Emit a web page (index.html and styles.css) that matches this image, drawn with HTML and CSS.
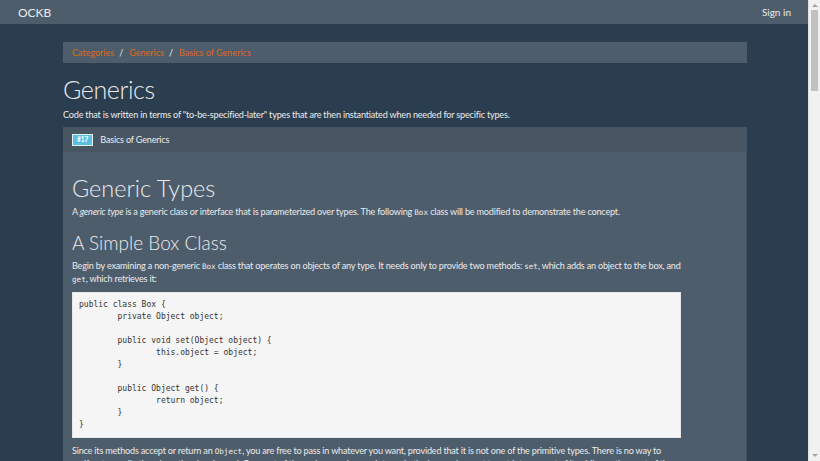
FILE: index.html
```html
<!DOCTYPE html>
<html>
<head>
<meta charset="utf-8">
<link rel="stylesheet" href="styles.css">
</head>
<body>
<div class="page">
<nav class="navbar">
  <a class="brand" href="#">OCKB</a>
  <a class="signin" href="#">Sign in</a>
</nav>
<main class="container">
  <ol class="breadcrumb">
    <li><a href="#">Categories</a></li>
    <li><a href="#">Generics</a></li>
    <li class="active">Basics of Generics</li>
  </ol>
  <h1 class="page-title">Generics</h1>
  <p class="lead">Code that is written in terms of "to-be-specified-later" types that are then instantiated when needed for specific types.</p>
  <section class="panel">
    <div class="panel-heading"><span class="label">#17</span><span class="panel-title">Basics of Generics</span></div>
    <div class="panel-body">
      <article class="content">
        <h2 class="h-big">Generic Types</h2>
        <p>A <em>generic type</em> is a generic class or interface that is parameterized over types. The following <code>Box</code> class will be modified to demonstrate the concept.</p>
        <h3 class="h-mid">A Simple Box Class</h3>
        <p>Begin by examining a non-generic <code>Box</code> class that operates on objects of any type. It needs only to provide two methods: <code>set</code>, which adds an object to the box, and <code>get</code>, which retrieves it:</p>
<pre>public class Box {
        private Object object;

        public void set(Object object) {
                this.object = object;
        }

        public Object get() {
                return object;
        }
}</pre>
        <p class="after">Since its methods accept or return an <code>Object</code>, you are free to pass in whatever you want, provided that it is not one of the primitive types. There is no way to verify, at compile time, how the class is used. One part of the code may place an Integer in the box and expect to get Integers out of it, while another part of the code may mistakenly pass in a String.</p>
      </article>
    </div>
  </section>
</main>
</div>
<div class="scrollbar" aria-hidden="true">
  <span class="arrow up"></span>
  <span class="thumb"></span>
  <span class="arrow down"></span>
</div>
</body>
</html>
```
FILE: styles.css
```css
html, body {
  margin: 0;
  padding: 0;
}
body {
  background: #2b3e50;
  color: #ebebeb;
  font-family: Lato, "Open Sans", sans-serif;
  font-size: 9.1px;
  letter-spacing: -0.2px;
  line-height: 13px;
  height: 461px;
  overflow: hidden;
}
a {
  text-decoration: none;
}
.page {
  margin-right: 12px;
}
.navbar {
  height: 24px;
  background: #4e5d6c;
  display: flex;
  align-items: center;
  justify-content: space-between;
  padding: 0 17px 0 18px;
  letter-spacing: 0;
}
.navbar a {
  color: #ebebeb;
}
.brand {
  font-size: 12px;
}
.signin {
  font-size: 10px;
}
.container {
  width: 684px;
  margin: 18px 0 0 63px;
}
.breadcrumb {
  list-style: none;
  margin: 0;
  padding: 0 9px;
  height: 21px;
  background: #4e5d6c;
  display: flex;
  align-items: center;
  font-size: 9px;
  letter-spacing: 0;
}
.breadcrumb li {
  color: #df691a;
}
.breadcrumb li + li::before {
  content: "/";
  color: #ebebeb;
  padding: 0 6px 0 5px;
}
.breadcrumb a {
  color: #df691a;
}
.page-title {
  font-weight: 300;
  font-size: 25px;
  letter-spacing: -0.4px;
  line-height: 30px;
  margin: 11px 0 4px;
}
.lead {
  margin: 0 0 6px;
}
.panel {
  background: #4e5d6c;
  border-right: 1px solid #44525f;
}
.panel-heading {
  background: #485563;
  height: 25px;
  display: flex;
  align-items: center;
  padding: 0 9px;
}
.label {
  background: #5bc0de;
  color: #fff;
  font-size: 6.5px;
  font-weight: 700;
  letter-spacing: 0;
  line-height: 10px;
  padding: 0 4px;
  border: 1px solid #e6f4f8;
  margin-right: 7px;
}
.panel-body {
  padding: 22px 9px 0;
}
.content {
  width: 611px;
}
.content p {
  margin: 0;
}
.h-big {
  font-weight: 300;
  font-size: 23.5px;
  letter-spacing: 0;
  line-height: 28px;
  margin: 0 0 3px;
}
.h-mid {
  font-weight: 300;
  font-size: 19px;
  letter-spacing: 0;
  line-height: 22px;
  margin: 14px 0 5px;
}
code {
  font-family: "DejaVu Sans Mono", monospace;
  font-size: 7.6px;
  letter-spacing: 0;
  line-height: 0;
}
pre {
  background: #f5f5f5;
  color: #333;
  font-family: "DejaVu Sans Mono", "Liberation Mono", monospace;
  font-size: 8px;
  letter-spacing: 0;
  line-height: 12px;
  margin: 7px 2px 6px 0;
  padding: 6px 6px;
  border: 1px solid #e8e8e8;
}
.scrollbar {
  position: fixed;
  top: 0;
  right: 0;
  width: 12px;
  height: 461px;
  background: #f1f1f1;
  border-left: 1px solid #e4e4e4;
  box-sizing: border-box;
}
.thumb {
  position: absolute;
  left: 2px;
  top: 10px;
  width: 7px;
  height: 81px;
  background: #c1c1c1;
}
.arrow {
  position: absolute;
  left: 3px;
  width: 0;
  height: 0;
  border-left: 3px solid transparent;
  border-right: 3px solid transparent;
}
.arrow.up {
  top: 4px;
  border-bottom: 3px solid #a3a3a3;
}
.arrow.down {
  bottom: 4px;
  border-top: 3px solid #a3a3a3;
}
```
